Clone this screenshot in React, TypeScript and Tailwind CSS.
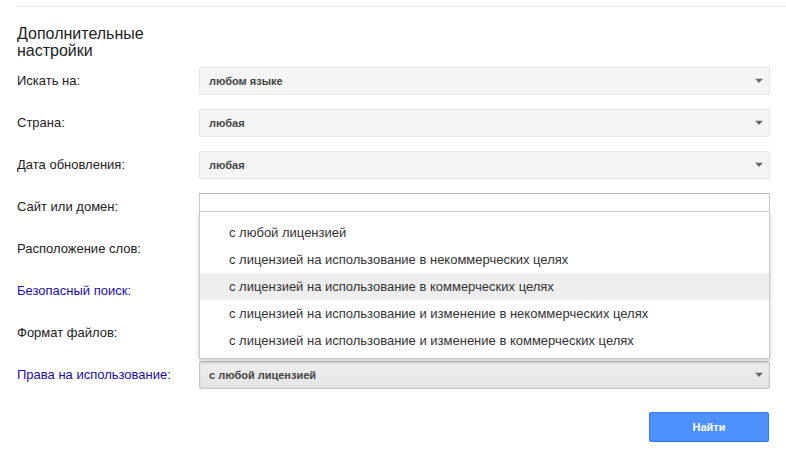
import React from "react";

function Arrow() {
  return (
    <svg width="8" height="5" viewBox="0 0 8 5" className="absolute right-[6px] top-1/2 -translate-y-1/2">
      <path d="M0 0 L8 0 L4 4.5 Z" fill="#666" />
    </svg>
  );
}

function Select({ value, active }: { value: string; active?: boolean }) {
  return (
    <div
      className={
        "relative h-[28px] w-[571px] rounded-[2px] border flex items-center pl-[9px] text-[11px] font-bold text-[#444] " +
        (active
          ? "border-[#c6c6c6] bg-gradient-to-b from-[#eeeeee] to-[#e4e4e4] shadow-[inset_0_1px_2px_rgba(0,0,0,0.1)]"
          : "border-[#e6e6e6] bg-[#f5f5f5]")
      }
    >
      {value}
      <Arrow />
    </div>
  );
}

const items = [
  "с любой лицензией",
  "с лицензией на использование в некоммерческих целях",
  "с лицензией на использование в коммерческих целях",
  "с лицензией на использование и изменение в некоммерческих целях",
  "с лицензией на использование и изменение в коммерческих целях",
];

function Row({ label, blue, children }: { label: string; blue?: boolean; children?: React.ReactNode }) {
  return (
    <div className="flex h-[42px] items-center">
      <div className={"w-[182px] text-[13px] " + (blue ? "text-[#1a0dab]" : "text-[#222]")}>{label}</div>
      <div className="relative">{children}</div>
    </div>
  );
}

export default function App() {
  return (
    <div
      className="relative w-[786px] h-[461px] bg-white overflow-hidden"
      style={{ fontFamily: '"Liberation Sans", Arial, sans-serif' }}
    >
      <div className="ml-[16px] mt-[6px] border-t border-[#ebebeb]" />
      <div className="pl-[17px]">
        <div className="pt-[18px] text-[16px] leading-[17px] text-[#222] w-[160px]">
          Дополнительные настройки
        </div>
        <div className="mt-[1px]">
          <Row label="Искать на:">
            <Select value="любом языке" />
          </Row>
          <Row label="Страна:">
            <Select value="любая" />
          </Row>
          <Row label="Дата обновления:">
            <Select value="любая" />
          </Row>
          <Row label="Сайт или домен:">
            <div className="h-[28px] w-[571px] border border-[#c9c9c9] border-t-[#bbb] bg-white" />
            <div className="absolute left-0 top-[18px] z-10 w-[571px] border border-[#c9c9c9] bg-white shadow-[0_2px_4px_rgba(0,0,0,0.2)] pt-[7px] pb-[4px]">
              {items.map((it, i) => (
                <div
                  key={i}
                  className={
                    "h-[27px] flex items-center pl-[29px] text-[13px] text-[#333] " +
                    (i === 2 ? "bg-[#eeeeee]" : "")
                  }
                >
                  {it}
                </div>
              ))}
            </div>
          </Row>
          <Row label="Расположение слов:" />
          <Row label="Безопасный поиск:" blue />
          <Row label="Формат файлов:" />
          <Row label="Права на использование:" blue>
            <Select value="с любой лицензией" active />
          </Row>
        </div>
        <div className="flex w-[752px] justify-end mt-[16px]">
          <button className="h-[30px] w-[120px] rounded-[2px] border border-[#3079ed] bg-[#4d90fe] text-[11px] font-bold text-white">
            Найти
          </button>
        </div>
      </div>
    </div>
  );
}
